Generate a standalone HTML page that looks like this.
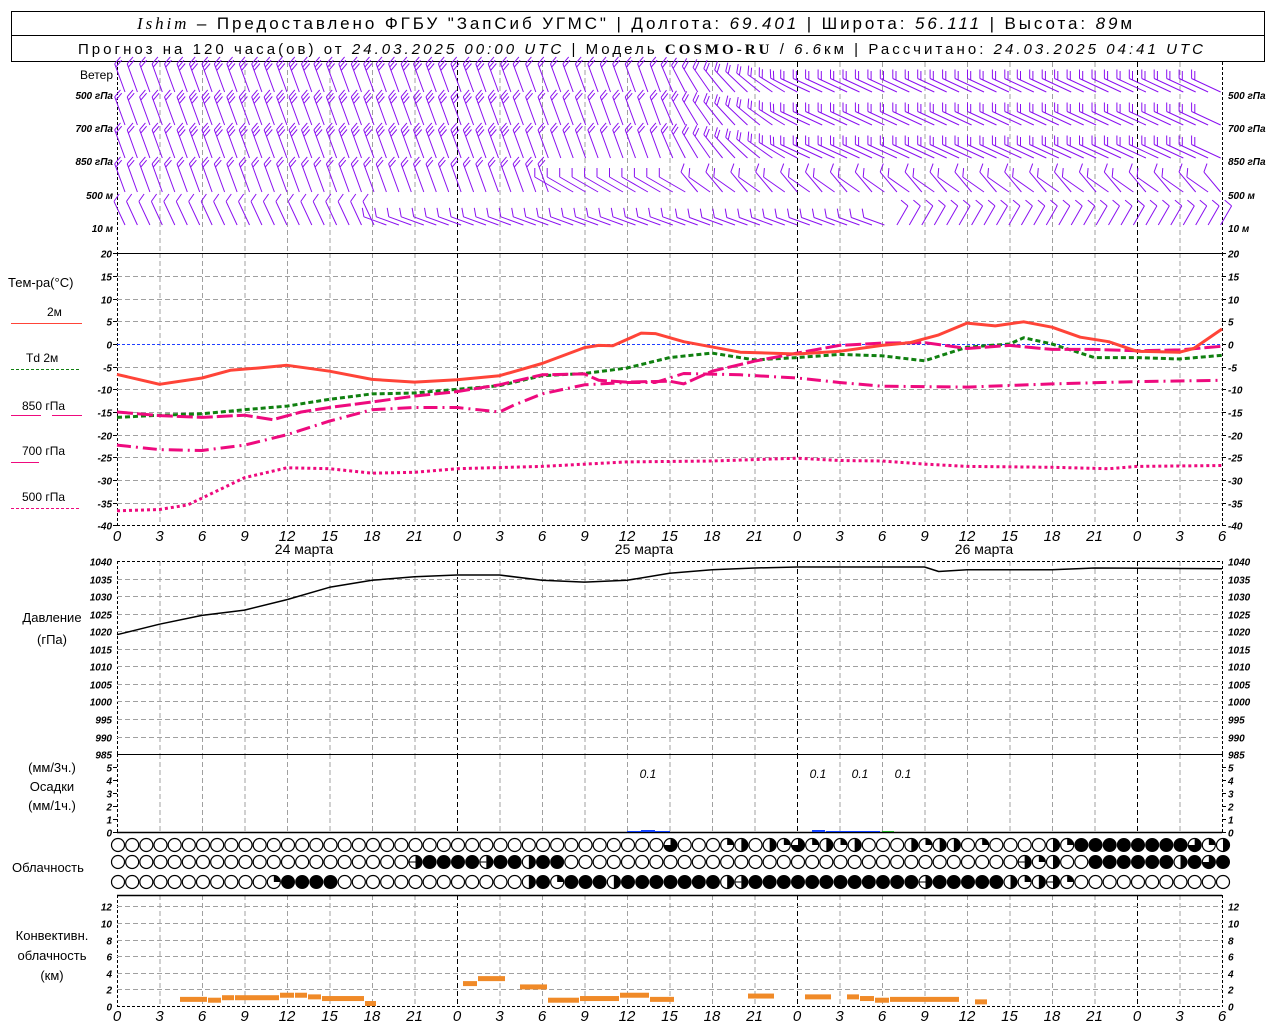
<!DOCTYPE html>
<html><head><meta charset="utf-8"><style>
html,body{margin:0;padding:0;background:#fff;width:1280px;height:1024px;overflow:hidden}
svg{display:block}
text{font-family:"Liberation Sans",sans-serif;fill:#000}
.ax{font-size:10px;font-style:italic;font-weight:bold}
.xl{font-size:15px;font-style:italic}
.lb{font-size:12px}
</style></head><body>
<svg id="s" width="1280" height="1024" xmlns="http://www.w3.org/2000/svg">
<rect x="11.5" y="11.5" width="1253" height="24" fill="none" stroke="#000"/>
<rect x="11.5" y="35.5" width="1253" height="26" fill="none" stroke="#000"/>
<text x="137" y="29" font-size="17" textLength="995" lengthAdjust="spacing"><tspan font-family="Liberation Serif" font-style="italic">Ishim</tspan> – Предоставлено ФГБУ "ЗапСиб УГМС" | Долгота: <tspan font-style="italic">69.401</tspan> | Широта: <tspan font-style="italic">56.111</tspan> | Высота: <tspan font-style="italic">89</tspan>м</text>
<text x="78" y="54" font-size="15" textLength="1125" lengthAdjust="spacing">Прогноз на 120 часа(ов) от <tspan font-style="italic">24.03.2025 00:00 UTC</tspan> | Модель <tspan font-family="Liberation Serif" font-weight="bold">COSMO-RU</tspan> / <tspan font-style="italic">6.6</tspan>км | Рассчитано: <tspan font-style="italic">24.03.2025 04:41 UTC</tspan></text>
<g id="g"></g>
</svg>
<script>
var NS="http://www.w3.org/2000/svg",G=document.getElementById("g");
function el(t,a,txt){var e=document.createElementNS(NS,t);for(var k in a)e.setAttribute(k,a[k]);if(txt!==undefined)e.textContent=txt;G.appendChild(e);return e;}
function X(h){return 117+h*14.1667;}
function line(x1,y1,x2,y2,c,w,d){var a={x1:x1,y1:y1,x2:x2,y2:y2,stroke:c,"stroke-width":w||1};if(d)a["stroke-dasharray"]=d;el("line",a);}
[[62,253],[253,525],[561,754],[754,832],[895,1007]].forEach(function(p){
 for(var i=0;i<=26;i++){var h=i*3,x=X(h)+.5;var mid=(h%24==0);
  if(i==0||i==26){line(x,p[0],x,p[1],"#000",1,"3,2");continue;}
  line(x,p[0],x,p[1],mid?"#000":"#a0a0a0",1,"5,3");}
});
function TY(t){return 344-t*4.533;}
for(var t=-40;t<=20;t+=5){var y=Math.round(TY(t))+.5;
 if(t==20)line(117,y,1222,y,"#000",1);else if(t==0)line(117,y,1222,y,"#2040ff",1,"3,2");else if(t!=-40)line(117,y,1222,y,"#a0a0a0",1,"5,3");
 el("text",{x:112,y:y+4,"text-anchor":"end","class":"ax"},String(t));el("text",{x:1228,y:y+4,"class":"ax"},String(t));
 line(113,y,117,y,"#000",1);line(1222,y,1226,y,"#000",1);}
line(117,525.5,1222,525.5,"#000",1,"3,2");
function PY(p){return 561+(1040-p)*3.51;}
for(var p=985;p<=1040;p+=5){var y=Math.round(PY(p))+.5;
 if(p==985)line(117,y,1222,y,"#000",1);else line(117,y,1222,y,p==1040?"#000":"#a0a0a0",1,p==1040?"3,2":"5,3");
 el("text",{x:112,y:y+4,"text-anchor":"end","class":"ax"},String(p));el("text",{x:1228,y:y+4,"class":"ax"},String(p));}
for(var v=0;v<=5;v++){var y=Math.round(832-v*13)+.5;el("text",{x:112,y:y+4,"text-anchor":"end","class":"ax"},String(v));el("text",{x:1228,y:y+4,"class":"ax"},String(v));line(113,y,117,y,"#000");line(1222,y,1226,y,"#000");}
line(117,832.5,1222,832.5,"#000",1.5);line(117,895.5,1222,895.5,"#000",1.5);
for(var v=0;v<=12;v+=2){var y=Math.round(1006-v*8.3)+.5;if(v>0)line(117,y,1222,y,"#a0a0a0",1,"5,3");else line(117,y,1222,y,"#000",1,"3,2");
 el("text",{x:112,y:y+4,"text-anchor":"end","class":"ax"},String(v));el("text",{x:1228,y:y+4,"class":"ax"},String(v));}
for(var i=0;i<=26;i++){var h=i*3,lab=String(h%24);
 el("text",{x:X(h),y:541,"text-anchor":"middle","class":"xl"},lab);
 el("text",{x:X(h),y:1021,"text-anchor":"middle","class":"xl"},lab);}
[["24 марта",304],["25 марта",644],["26 марта",984]].forEach(function(d){el("text",{x:d[1],y:554,"text-anchor":"middle","font-size":"14"},d[0]);});
function curve(pts,fy,c,w,d){var s="";pts.forEach(function(q,i){s+=(i?"L":"M")+X(q[0]).toFixed(1)+","+fy(q[1]).toFixed(1);});var a={d:s,fill:"none",stroke:c,"stroke-width":w,"stroke-linejoin":"round"};if(d)a["stroke-dasharray"]=d;el("path",a);}
var T2=[[0,-6.7],[3,-8.9],[6,-7.5],[8,-5.8],[10,-5.3],[12,-4.7],[15,-6],[18,-7.8],[21,-8.4],[24,-7.9],[27,-7],[30,-4.3],[33,-0.8],[34,-0.3],[35,-0.4],[37,2.4],[38,2.3],[40,0.5],[44,-1.8],[48,-2.2],[51,-1.6],[54,-0.3],[56,0.3],[58,2],[60,4.6],[62,4],[64,4.9],[66,3.7],[68,1.5],[70,0.5],[72,-1.6],[75,-1.8],[76,-1],[78,3.3]];
var TD=[[0,-16.2],[3,-15.7],[6,-15.4],[9,-14.5],[12,-13.7],[15,-12.2],[18,-11],[21,-10.8],[24,-10],[27,-9.2],[30,-7],[33,-6.5],[36,-5.3],[39,-3],[42,-2],[45,-3.5],[48,-3],[51,-2.3],[54,-2.6],[57,-3.7],[60,-0.7],[63,0],[64,1.4],[66,0],[69,-3],[72,-3],[75,-3.3],[78,-2.5]];
var T85=[[0,-15],[3,-15.8],[6,-16.2],[9,-15.7],[11,-16.7],[13,-15],[15,-14],[18,-12.8],[21,-11.5],[24,-10.5],[27,-9],[30,-6.8],[33,-6.6],[34,-8],[36,-8.4],[39,-8.2],[40,-8.8],[42,-6],[45,-3.8],[48,-2],[51,-0.3],[54,0.2],[57,0.3],[60,-1],[63,-0.3],[66,-1.2],[69,-1.2],[72,-1.5],[75,-1.3],[78,-0.5]];
var T70=[[0,-22.3],[3,-23.3],[6,-23.5],[9,-22.3],[12,-20],[15,-17],[18,-14.5],[21,-14],[24,-14],[27,-15],[28,-13.5],[30,-11],[33,-9],[36,-8.5],[38,-8.5],[40,-6.5],[44,-6.8],[48,-7.5],[51,-8.5],[54,-9.3],[60,-9.5],[66,-8.8],[72,-8.3],[78,-8]];
var T50=[[0,-36.8],[3,-36.5],[5,-35.5],[9,-29.5],[12,-27.3],[15,-27.5],[18,-28.5],[21,-28.3],[24,-27.5],[30,-27],[36,-26],[42,-25.8],[48,-25.2],[51,-25.7],[54,-25.8],[57,-26.5],[60,-27],[66,-27.2],[70,-27.5],[72,-27],[78,-26.8]];
var M="#ee0a7e";
curve(T50,TY,M,3,"3,3");
curve(T70,TY,M,3,"14,5,2,5");
curve(TD,TY,"#108010",3,"5,3");
curve(T85,TY,M,3,"16,4");
curve(T2,TY,"#ff4438",3);
var PR=[[0,1019],[3,1022],[6,1024.5],[9,1026],[12,1029],[15,1032.5],[18,1034.5],[21,1035.5],[24,1036],[27,1036],[30,1034.5],[33,1034],[36,1034.5],[39,1036.5],[42,1037.5],[45,1038],[48,1038.3],[57,1038.3],[58,1037],[60,1037.5],[66,1037.5],[69,1038],[78,1037.8]];
curve(PR,PY,"#000",1.5);
[[627,641,1,"#1040ff"],[641,655,2,"#1040ff"],[655,670,1,"#1040ff"],[812,825,2,"#1040ff"],[826,880,1,"#1040ff"],[882,894,1,"#20b020"]].forEach(function(b){el("rect",{x:b[0],y:832-b[2],width:b[1]-b[0],height:b[2],fill:b[3]});});
[648,818,860,903].forEach(function(x){el("text",{x:x,y:778,"text-anchor":"middle","font-size":"12","font-style":"italic"},"0.1");});
[[180,208,1.1],[208,222,1.0],[222,235,1.3],[235,280,1.3],[280,295,1.6],[295,308,1.6],[308,322,1.4],[322,365,1.2],[365,377,0.6],[463,478,3.0],[478,506,3.6],[520,548,2.6],[548,580,1.0],[580,620,1.2],[620,650,1.6],[650,675,1.1],[748,775,1.5],[805,832,1.4],[847,860,1.4],[860,875,1.2],[875,890,1.0],[890,960,1.1],[975,988,0.8]].forEach(function(b){var y=1006-b[2]*8.3;el("rect",{x:b[0],y:y,width:b[1]-b[0]-1,height:5,fill:"#f08a28"});});
var R=[
"oooooooooooooooooooooooooooooooooooooootoooqhohqtqhqhooohqhhoqoooohqfffffffftqhh",
"oooooooooooooooooooooeffffeffhffooooooooooooooooooooooooooooooooeqhooffffffhftfe",
"oooooooooooqffffooooooooooooohfqfffhfffffffheffffffffffffefffffhqheqoooooooooooo"];
var CY=[845,862,882];
R.forEach(function(r,k){for(var i=0;i<79;i++){var c=r[i]||"o",cx=X(i)+1,cy=CY[k],rr=6.5;
 if(c=="f"){el("circle",{cx:cx,cy:cy,r:rr,fill:"#000",stroke:"#000"});continue;}
 el("circle",{cx:cx,cy:cy,r:rr,fill:"#fff",stroke:"#000","stroke-width":1.2});
 if(c=="h")el("path",{d:"M"+cx+","+(cy-rr)+"A"+rr+","+rr+" 0 0 1 "+cx+","+(cy+rr)+"Z",fill:"#000"});
 if(c=="q")el("path",{d:"M"+cx+","+cy+"L"+cx+","+(cy-rr)+"A"+rr+","+rr+" 0 0 1 "+(cx+rr)+","+cy+"Z",fill:"#000"});
 if(c=="t")el("path",{d:"M"+cx+","+cy+"L"+cx+","+(cy-rr)+"A"+rr+","+rr+" 0 1 1 "+(cx-rr)+","+cy+"Z",fill:"#000"});
 if(c=="e"){el("path",{d:"M"+cx+","+(cy-rr)+"A"+rr+","+rr+" 0 0 1 "+cx+","+(cy+rr)+"Z",fill:"#000"});line(cx-rr,cy,cx,cy,"#000",1);}
}});
var WC="#8a10f0";
function barb(x,yb,ang,n,L,fl){var a=ang*Math.PI/180,dx=Math.sin(a),dy=-Math.cos(a);
 var tx=x+dx*L,ty=yb+dy*L,s="M"+x.toFixed(1)+","+yb+"L"+tx.toFixed(1)+","+ty.toFixed(1);
 var fa=(ang+fl)*Math.PI/180,fx=Math.sin(fa)*9,fy=-Math.cos(fa)*9;
 for(var j=0;j<n;j++){var px=tx-dx*j*3.5,py=ty-dy*j*3.5;s+="M"+px.toFixed(1)+","+py.toFixed(1)+"l"+fx.toFixed(1)+","+fy.toFixed(1);}
 el("path",{d:s,fill:"none",stroke:WC,"stroke-width":1});}
var LV=[92,125,158,192,225];
for(var k=0;k<5;k++){for(var i=0;i<89;i++){var x=117+i*12.45,h=(x-117)/14.1667,ang,n,L=30,fl=60;
 if(k<3){if(h<38){ang=-20;n=(h<4||h>28)?2:3;}else if(h<48){ang=-20-(h-38)*4.5;n=2;}else{ang=-65;n=2;fl=65;L=32;}}
 else if(k==3){if(h<30){ang=-20;n=2;}else if(h<40){ang=-60;n=1;}else{ang=(i%2?-55:-40);n=1;L=26;}}
 else{if(h<18){ang=-25;n=1;L=26;}else if(h<40){ang=-70;n=1;L=24;}else if(h<54){ang=-70;n=1;L=22;}else{ang=30;n=1;L=22;fl=-80;}}
 barb(x+8,LV[k],ang,n,L,fl);}}
el("text",{x:113,y:79,"text-anchor":"end","font-size":"12"},"Ветер");
[["500 гПа",99],["700 гПа",132],["850 гПа",165],["500 м",199],["10   м",232]].forEach(function(l){
 el("text",{x:113,y:l[1],"text-anchor":"end","class":"ax"},l[0]);el("text",{x:1228,y:l[1],"class":"ax"},l[0]);});
el("text",{x:8,y:287,"font-size":"13"},"Тем-ра(°С)");
el("text",{x:47,y:316,"class":"lb"},"2м");line(11,323.5,82,323.5,"#ff4438",1);
el("text",{x:26,y:362,"class":"lb"},"Td  2м");line(11,369.5,79,369.5,"#108010",1,"3,2");
el("text",{x:22,y:410,"class":"lb"},"850 гПа");line(11,415.5,41,415.5,M,1);line(52,415.5,82,415.5,M,1);
el("text",{x:22,y:455,"class":"lb"},"700 гПа");line(11,462.5,40,462.5,M,1,"28,5,2,5");
el("text",{x:22,y:501,"class":"lb"},"500 гПа");line(11,508.5,79,508.5,M,1,"3,2");
el("text",{x:52,y:622,"text-anchor":"middle","font-size":"13"},"Давление");
el("text",{x:52,y:644,"text-anchor":"middle","font-size":"13"},"(гПа)");
el("text",{x:52,y:772,"text-anchor":"middle","font-size":"13"},"(мм/3ч.)");
el("text",{x:52,y:791,"text-anchor":"middle","font-size":"13"},"Осадки");
el("text",{x:52,y:810,"text-anchor":"middle","font-size":"13"},"(мм/1ч.)");
el("text",{x:12,y:872,"font-size":"13"},"Облачность");
el("text",{x:52,y:940,"text-anchor":"middle","font-size":"13"},"Конвективн.");
el("text",{x:52,y:960,"text-anchor":"middle","font-size":"13"},"облачность");
el("text",{x:52,y:980,"text-anchor":"middle","font-size":"13"},"(км)");
</script>
</body></html>
